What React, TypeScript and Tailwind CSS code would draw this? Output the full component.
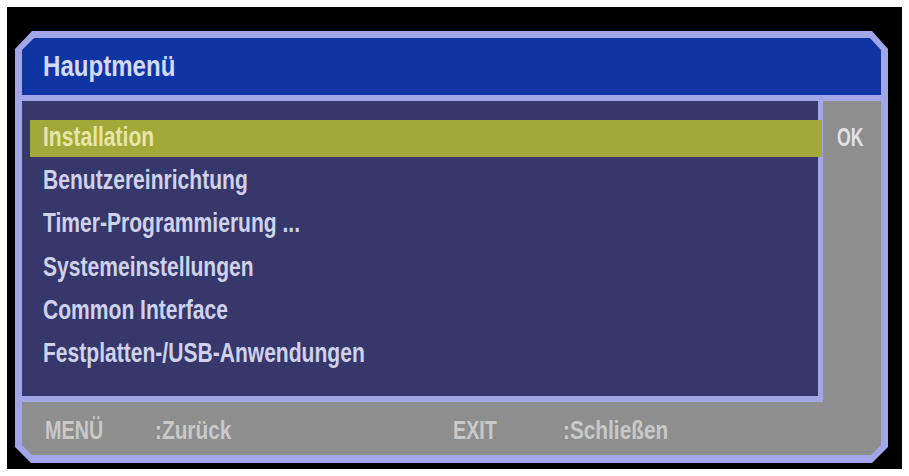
import React from "react";

const font = {
  fontFamily: '"Liberation Sans", Arial, sans-serif',
};

const eintraege = [
  "Installation",
  "Benutzereinrichtung",
  "Timer-Programmierung ...",
  "Systemeinstellungen",
  "Common Interface",
  "Festplatten-/USB-Anwendungen",
];

export default function App() {
  const aktiv = 0;

  return (
    <div className="w-full h-[476px] bg-white p-[7px]" style={font}>
      <div className="h-full bg-black pl-[8px] pr-[14px] pt-[24px] pb-[6px]">
        {/* Rahmen */}
        <div className="h-full flex flex-col bg-[#a3a6e6] p-[7px] pb-[8px] [clip-path:polygon(17px_0,calc(100%-16px)_0,100%_18px,100%_calc(100%-16px),calc(100%-16px)_100%,16px_100%,0_calc(100%-16px),0_18px)]">
          {/* Kopfzeile */}
          <div className="h-[57px] shrink-0 flex items-center pl-[21px] bg-[#1034a3] [clip-path:polygon(12px_0,calc(100%-11px)_0,100%_12px,100%_100%,0_100%,0_12px)]">
            <span className="inline-block origin-left scale-x-[0.83] text-[29px] font-bold text-[#d3daf6] leading-none">
              Hauptmenü
            </span>
          </div>

          {/* Inhalt + Fußzeile */}
          <div className="mt-[6px] flex-1 flex flex-col bg-[#8e8e8e] [clip-path:polygon(0_0,100%_0,100%_calc(100%-10px),calc(100%-10px)_100%,10px_100%,0_calc(100%-10px))]">
            <div className="flex h-[301px]">
              <div className="w-[801px] bg-[#36376a] border-r-[5px] border-b-[6px] border-[#a3a6e6] pt-[19px]">
                {eintraege.map((e, i) => (
                  <div
                    key={e}
                    className={
                      i === aktiv
                        ? "h-[37px] mb-[6.4px] ml-[8px] -mr-[4px] pl-[13px] flex items-center bg-[#a3a83a] text-[#e6e6a6]"
                        : "h-[37px] mb-[6.4px] ml-[8px] pl-[13px] flex items-center text-[#cfd2ea]"
                    }
                  >
                    <span className="inline-block origin-left scale-x-[0.78] text-[27px] font-bold leading-none -mt-[3px]">
                      {e}
                    </span>
                  </div>
                ))}
              </div>
              <div className="flex-1 pt-[19px] pl-[14px]">
                <div className="h-[37px] flex items-center">
                  <span className="inline-block origin-left scale-x-[0.68] text-[26px] font-bold leading-none text-[#e2e2e2] -mt-[3px]">
                    OK
                  </span>
                </div>
              </div>
            </div>

            <div className="flex-1 flex items-center text-[26px] font-bold leading-none text-[#c9c9c9] pt-[2px]">
              <span className="w-[133px] pl-[23px]">
                <span className="inline-block origin-left scale-x-[0.76]">MENÜ</span>
              </span>
              <span className="w-[298px]">
                <span className="inline-block origin-left scale-x-[0.8]">:Zurück</span>
              </span>
              <span className="w-[110px]">
                <span className="inline-block origin-left scale-x-[0.76]">EXIT</span>
              </span>
              <span>
                <span className="inline-block origin-left scale-x-[0.8]">:Schließen</span>
              </span>
            </div>
          </div>
        </div>
      </div>
    </div>
  );
}
